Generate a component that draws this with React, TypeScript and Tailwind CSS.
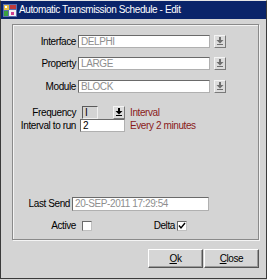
import React from "react";

const font = { fontFamily: '"Liberation Sans", Arial, sans-serif' };

function DropBtn({ dark = false }: { dark?: boolean }) {
  const c = dark ? "#000000" : "#6e6e6e";
  return (
    <div className="w-[12px] h-[13px] bg-[#dcdcdc] border border-t-[#f4f4f4] border-l-[#f4f4f4] border-r-[#7a7a7a] border-b-[#7a7a7a] flex items-center justify-center">
      <svg width="8" height="9" viewBox="0 0 8 9">
        <rect x="3" y="0" width="2" height="3" fill={c} />
        <polygon points="0.5,3 7.5,3 4,6.5" fill={c} />
        <rect x="1" y="7" width="6" height="1" fill={c} />
      </svg>
    </div>
  );
}

function Input({ w, text, dim = true, bg = "bg-white" }: { w: string; text: string; dim?: boolean; bg?: string }) {
  return (
    <div
      className={`${w} h-[13px] ${bg} border border-t-[#6a6a6a] border-l-[#6a6a6a] border-r-[#b0b0b0] border-b-[#b0b0b0] flex items-center pl-[2px] overflow-hidden whitespace-nowrap leading-none ${dim ? "text-[#8e8e8e]" : "text-black"}`}
    >
      {text}
    </div>
  );
}

function ComboRow({ label, value }: { label: string; value: string }) {
  return (
    <div className="flex items-center h-[13px]">
      <div className="w-[62px] text-right pr-[1px] leading-none">{label}</div>
      <div className="ml-[1px]">
        <Input w="w-[132px]" text={value} />
      </div>
      <div className="ml-[4px]">
        <DropBtn />
      </div>
    </div>
  );
}

function Check({ checked }: { checked?: boolean }) {
  return (
    <div className="w-[10px] h-[10px] bg-white border border-t-[#6a6a6a] border-l-[#6a6a6a] border-r-[#c0c0c0] border-b-[#c0c0c0] flex items-center justify-center">
      {checked && (
        <svg width="8" height="8" viewBox="0 0 8 8">
          <polyline points="1,3.5 3,6 7,1" fill="none" stroke="#000" strokeWidth="1.4" />
        </svg>
      )}
    </div>
  );
}

function Btn({ u, rest }: { u: string; rest: string }) {
  return (
    <div className="w-[55px] h-[19px] bg-[#d6d6d6] border border-t-[#ffffff] border-l-[#ffffff] border-r-[#555555] border-b-[#555555] shadow-[inset_-1px_-1px_0_#9a9a9a] flex items-center justify-center text-black leading-none">
      <span>
        <span className="underline">{u}</span>
        {rest}
      </span>
    </div>
  );
}

export default function App() {
  return (
    <div
      className="w-[267px] h-[280px] bg-[#d4d4d4] text-[10px] tracking-[-0.4px] text-black overflow-hidden"
      style={font}
    >
      <div className="w-[267px] h-[279px] border-l border-r border-b border-l-[#3a3a3a] border-r-[#3a3a3a] border-b-[#3a3a3a] border-t border-t-[#e6e6e6] flex flex-col">
        {/* title bar */}
        <div className="h-[18px] bg-[#0a246a] flex items-center pl-[2px] shrink-0">
          <svg width="14" height="13" viewBox="0 0 14 13" className="mr-[2px]">
            <rect x="0" y="0" width="14" height="13" fill="#5a6fae" />
            <rect x="1" y="1" width="5" height="5" fill="#e8c040" />
            <rect x="7" y="1" width="6" height="4" fill="#c03a3a" />
            <rect x="1" y="7" width="4" height="5" fill="#3aa040" />
            <rect x="6" y="6" width="7" height="6" fill="#f2f2f2" />
            <rect x="8" y="8" width="3" height="3" fill="#d04090" />
            <rect x="2" y="2" width="2" height="2" fill="#ffffff" />
          </svg>
          <span className="text-white text-[10px] leading-none">Automatic Transmission Schedule - Edit</span>
        </div>

        {/* panel */}
        <div className="ml-[11px] mt-[5px] w-[247px] h-[216px] border border-t-[#8a8a8a] border-l-[#8a8a8a] border-r-[#8a8a8a] border-b-[#8a8a8a] shadow-[inset_1px_1px_0_#f4f4f4,1px_1px_0_#f4f4f4] shrink-0">
          <div className="pl-[2px] pt-[10px] flex flex-col">
            <ComboRow label="Interface" value="DELPHI" />
            <div className="mt-[9px]">
              <ComboRow label="Property" value="LARGE" />
            </div>
            <div className="mt-[10px]">
              <ComboRow label="Module" value="BLOCK" />
            </div>

            <div className="mt-[13px] flex items-center h-[13px]">
              <div className="w-[62px] text-right pr-[1px] leading-none">Frequency</div>
              <div className="ml-[5px]">
                <div className="w-[16px] h-[13px] bg-[#d4d4d4] border border-t-[#5a5a5a] border-l-[#5a5a5a] border-r-[#f0f0f0] border-b-[#f0f0f0] flex items-center pl-[2px] leading-none">
                  I
                </div>
              </div>
              <div className="ml-[15px]">
                <DropBtn dark />
              </div>
              <div className="ml-[5px] text-[#8a1a1a] leading-none">Interval</div>
            </div>
            <div className="flex items-center h-[13px]">
              <div className="w-[62px] text-right pr-[1px] leading-none">Interval to run</div>
              <div className="ml-[3px]">
                <Input w="w-[45px]" text="2" dim={false} />
              </div>
              <div className="ml-[5px] text-[#8a1a1a] leading-none">Every 2 minutes</div>
            </div>

            <div className="mt-[65px] flex items-center h-[14px]">
              <div className="w-[56px] text-right pr-[1px] leading-none">Last Send</div>
              <div className="ml-[1px]">
                <div className="w-[137px] h-[14px] bg-white border border-t-[#6a6a6a] border-l-[#6a6a6a] border-r-[#b0b0b0] border-b-[#b0b0b0] flex items-center pl-[2px] text-[#8e8e8e] leading-none whitespace-nowrap">
                  20-SEP-2011 17:29:54
                </div>
              </div>
            </div>

            <div className="mt-[10px] flex items-center h-[10px]">
              <div className="w-[62px] text-right pr-[1px] leading-none">Active</div>
              <div className="ml-[5px]">
                <Check />
              </div>
              <div className="ml-[58px] w-[26px] text-right pr-[1px] leading-none">Delta</div>
              <div className="ml-[1px]">
                <Check checked />
              </div>
            </div>
          </div>
        </div>

        {/* buttons */}
        <div className="mt-[9px] flex justify-end pr-[7px] gap-[1px]">
          <Btn u="O" rest="k" />
          <Btn u="C" rest="lose" />
        </div>
      </div>
    </div>
  );
}
